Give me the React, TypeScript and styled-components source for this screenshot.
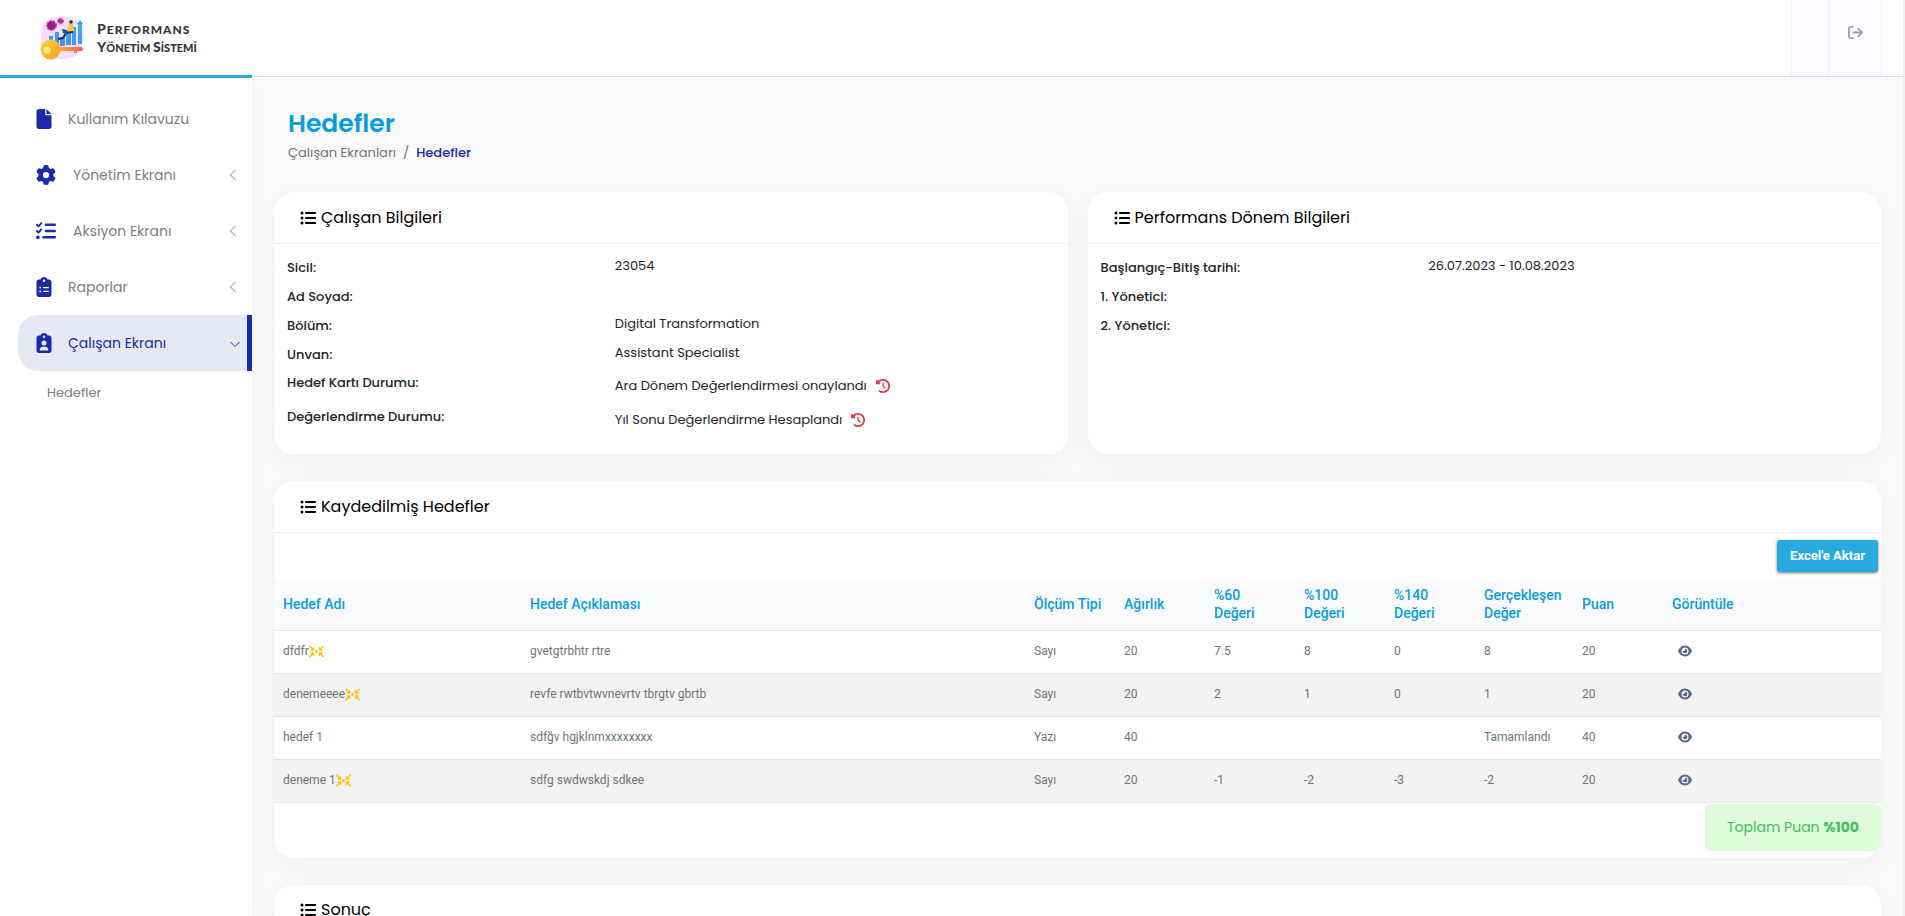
import React from "react";
import styled, { createGlobalStyle, css } from "styled-components";
import {
  FaArrowRightFromBracket,
  FaArrowsToCircle,
  FaClipboardList,
  FaClipboardUser,
  FaClockRotateLeft,
  FaEye,
  FaFile,
  FaGear,
  FaListCheck,
  FaListUl,
} from "react-icons/fa6";

const GlobalStyle = createGlobalStyle`
  *, *::before, *::after { box-sizing: border-box; }
  body {
    margin: 0;
    background: #f9f9f9;
    color: #212529;
    font: 400 13px/20px Poppins, Inter, sans-serif;
  }
  a { color: inherit; text-decoration: none; }
  h1, h2, p, ul, ol, dl, dd { margin: 0; padding: 0; }
  ul, ol { list-style: none; }
  button { font: inherit; border: 0; background: none; padding: 0; cursor: pointer; }
`;

const Shell = styled.div`
  display: grid;
  grid-template-columns: 252px minmax(0, 1fr);
  grid-template-rows: 78px minmax(0, 1fr);
  height: 100vh;
  overflow: hidden;
  border-right: 2px solid #f0f0f0;
`;

const Brand = styled.a`
  display: flex;
  align-items: center;
  gap: 13px;
  padding-left: 40px;
  background: #fff;
  border-bottom: 3px solid #29abe2;
`;

const BrandName = styled.span`
  display: flex;
  flex-direction: column;
  font: 900 11px/17px Lato, sans-serif;
  color: #33363b;
`;

const BrandLine = styled.span<{ $wide?: boolean }>`
  font-size: ${(p) => (p.$wide ? 12 : 11)}px;
  letter-spacing: ${(p) => (p.$wide ? "1px" : "normal")};
`;

const BrandCap = styled.span`
  font-size: 14px;
`;

const TopBar = styled.header`
  display: flex;
  justify-content: flex-end;
  height: 77px;
  padding-right: 22px;
  background: #fff;
  border-bottom: 1px solid #d8dbe6;
`;

const TopCell = styled.div<{ $width: number }>`
  display: flex;
  justify-content: center;
  align-items: flex-start;
  width: ${(p) => p.$width}px;
  padding-top: 25px;
  background: #fafbfe;
  border: solid #f1f3fa;
  border-width: 0 1px;
`;

const LogoutButton = styled.button`
  display: flex;
  color: #98a6ad;
  font-size: 15px;
`;

const Sidebar = styled.nav`
  padding-top: 13px;
  background: #fff;
  box-shadow: 0 0 16px rgba(0, 0, 0, 0.03);
  z-index: 1;
`;

const NavLink = styled.a<{ $active?: boolean }>`
  display: flex;
  align-items: center;
  height: 56px;
  margin-left: 18px;
  padding: 0 14px 0 18px;
  font-size: 14px;
  color: #808080;
  border-radius: 20px 0 0 20px;

  ${(p) =>
    p.$active &&
    css`
      padding-right: 7px;
      color: #1b2aa6;
      background: #e6e9f4;
      border-right: 5px solid #1b2aa6;
    `}
`;

const NavIcon = styled.span<{ $narrow?: boolean }>`
  display: flex;
  justify-content: center;
  flex: none;
  width: ${(p) => (p.$narrow ? 15 : 20)}px;
  margin-right: 17px;
  color: #1b2aa6;
  font-size: 20px;

  & > svg { flex: none; }
`;

const NavLabel = styled.span`
  flex: 1;
`;

const SubLink = styled.a`
  display: block;
  padding: 12px 0 12px 47px;
  font-size: 13px;
  color: #808080;
`;

const Content = styled.main`
  padding: 30px 22px;
  overflow-y: auto;
  scrollbar-width: none;
`;

const PageHead = styled.div`
  padding: 0 14px 29px;
`;

const PageTitle = styled.h1`
  font-size: 25px;
  line-height: 32px;
  font-weight: 600;
  color: #069ee0;
`;

const Crumbs = styled.ol`
  display: flex;
  gap: 7px;
  padding-top: 3px;
  color: #6c757d;
`;

const CurrentCrumb = styled.li`
  color: #1b2aa6;
  font-weight: 500;
`;

const CardRow = styled.div`
  display: grid;
  grid-template-columns: 1fr 1fr;
  gap: 20px;
`;

const Card = styled.section`
  display: flex;
  flex-direction: column;
  margin-bottom: 27px;
  overflow: hidden;
  background: #fff;
  border-radius: 20px;
  box-shadow: 0 8px 28px rgba(82, 63, 165, 0.05);
`;

const CardTitle = styled.h2`
  display: flex;
  align-items: center;
  gap: 5px;
  height: 52px;
  padding: 0 26px;
  font-size: 16px;
  line-height: 24px;
  font-weight: 400;
  color: #000;
  border-bottom: 1px solid #eceef0;
`;

const InfoList = styled.dl`
  padding: 8px 0 18px 13px;
`;

const InfoRow = styled.div<{ $tall?: boolean }>`
  display: grid;
  grid-template-columns: 42% 58%;
  height: ${(p) => (p.$tall ? 34 : 29)}px;

  dt {
    padding-top: ${(p) => (p.$tall ? 5 : 6)}px;
    font-weight: 500;
  }
  dd {
    display: flex;
    align-items: center;
    gap: 9px;
    height: ${(p) => (p.$tall ? 36 : 27)}px;
  }
`;

const HistoryButton = styled.button`
  display: flex;
  color: #dc3545;
  font-size: 14px;
`;

const TableTools = styled.div`
  display: flex;
  justify-content: flex-end;
  padding: 7px 3px;
`;

const ExportButton = styled.button`
  width: 101px;
  height: 32px;
  font: 700 13px/20px Roboto, sans-serif;
  color: #fff;
  background: #29abe2;
  border-radius: 3px;
  box-shadow: 0 1px 3px rgba(0, 0, 0, 0.55);
`;

const GoalTable = styled.table`
  width: 100%;
  table-layout: fixed;
  border-collapse: collapse;
  font-family: Roboto, sans-serif;

  th, td {
    text-align: left;
    border-bottom: 1px solid #e3e6e9;
  }
  th {
    height: 51px;
    padding: 0 9px;
    font-size: 14px;
    line-height: 18px;
    font-weight: 500;
    white-space: pre-line;
    color: #069ee0;
    background: #f9fafc;
  }
  td {
    height: 43px;
    padding: 0 9px 1px;
    font-size: 12px;
    line-height: 16px;
    color: #6c757d;
  }
  tbody tr:nth-child(even) { background: #f3f3f3; }
`;

const Column = styled.col<{ $width?: number }>`
  width: ${(p) => (p.$width ? `${p.$width}px` : "auto")};
`;

const GoalName = styled.span`
  display: flex;
  align-items: center;

  & > svg {
    color: #ffc107;
    width: 15px;
    height: 15px;
  }
`;

const ViewButton = styled.button`
  display: flex;
  margin-left: 6px;
  color: #5b6787;
  font-size: 14px;
`;

const TotalArea = styled.div`
  display: flex;
  justify-content: flex-end;
  padding: 1px 0 7px;
`;

const Total = styled.p`
  padding: 11px 22px 12px;
  font-size: 14px;
  line-height: 24px;
  color: #44bd5d;
  background: #dffbd9;
  border-radius: 6px;
`;

const BrandLogo = () => (
  <svg width="44" height="44" viewBox="0 0 44 44" aria-hidden="true">
    <defs>
      <linearGradient id="bar" x1="0" y1="0" x2="0" y2="1">
        <stop offset="0" stopColor="#2fb5fb" />
        <stop offset="1" stopColor="#4b8cf0" />
      </linearGradient>
      <linearGradient id="gold" x1="0" y1="0" x2="1" y2="1">
        <stop offset="0" stopColor="#ffd93c" />
        <stop offset="1" stopColor="#f39a1c" />
      </linearGradient>
      <linearGradient id="shaft" x1="0" y1="0" x2="1" y2="0">
        <stop offset="0" stopColor="#fbb02c" />
        <stop offset="1" stopColor="#f0634e" />
      </linearGradient>
    </defs>
    <path d="M8 4C17-1 29 0 36 4c7 5 8 15 6 25-2 11-10 14-20 14C9 43 1 38 1 25 0 16 1 9 8 4Z" fill="#f5dcf8" />
    <g fill="url(#bar)">
      <path d="M9 20h4v11H9zM15 16h4v15h-4zM20 21h5v9h-5zM26 15h5v14h-5zM32 11h4v18h-4zM38 8h4v20h-4z" />
      <path d="m37 8 3-4 3 4z" />
    </g>
    <circle cx="11.500" cy="9.500" r="3" fill="#8e1f9c" stroke="#a4158f" strokeWidth="3" />
    <circle cx="11.500" cy="9.500" r="5" fill="none" stroke="#b32083" strokeDasharray="2 1.500" />
    <circle cx="20.500" cy="5" r="2" fill="#c2308f" stroke="#a4158f" />
    <circle cx="20.500" cy="5" r="3" fill="none" stroke="#b32083" strokeDasharray="1.500 1" />
    <circle cx="31" cy="6" r="1.800" fill="#24275c" />
    <path d="m29 8 4 0 1 7-5 1-2-3z" fill="#ffc928" />
    <path d="m33 16-7 1-3 5-5 1" fill="none" stroke="#20265e" strokeWidth="2" />
    <path d="m22 13 5 1 1 4-5-1z" fill="#1b4fb4" />
    <path d="M18 31h24q2 2 0 4h-5v2h-3v-2H18z" fill="url(#shaft)" />
    <circle cx="10.500" cy="33.500" r="10" fill="url(#gold)" />
    <circle cx="7" cy="34" r="4.500" fill="#ffe27a" stroke="#f2a626" />
  </svg>
);

const Chevron = ({ open }: { open?: boolean }) => (
  <svg width="10" height="12" viewBox="0 0 10 12" fill="none" stroke="currentColor" aria-hidden="true">
    <path d={open ? "M.5 5 5 9.500 9.500 5" : "M7.500 1 2.500 6 7.500 11"} />
  </svg>
);

const navItems = [
  { label: "Kullanım Kılavuzu", icon: FaFile, narrow: true },
  { label: "Yönetim Ekranı", icon: FaGear, group: true },
  { label: "Aksiyon Ekranı", icon: FaListCheck, group: true },
  { label: "Raporlar", icon: FaClipboardList, narrow: true, group: true },
  { label: "Çalışan Ekranı", icon: FaClipboardUser, narrow: true, group: true, active: true },
];

type Info = { label: string; value?: string; history?: boolean };

const employeeInfo: Info[] = [
  { label: "Sicil:", value: "23054" },
  { label: "Ad Soyad:" },
  { label: "Bölüm:", value: "Digital Transformation" },
  { label: "Unvan:", value: "Assistant Specialist" },
  { label: "Hedef Kartı Durumu:", value: "Ara Dönem Değerlendirmesi onaylandı", history: true },
  { label: "Değerlendirme Durumu:", value: "Yıl Sonu Değerlendirme Hesaplandı", history: true },
];

const periodInfo: Info[] = [
  { label: "Başlangıç-Bitiş tarihi:", value: "26.07.2023 - 10.08.2023" },
  { label: "1. Yönetici:" },
  { label: "2. Yönetici:" },
];

const columns: { title: string; width?: number }[] = [
  { title: "Hedef Adı", width: 247 },
  { title: "Hedef Açıklaması" },
  { title: "Ölçüm Tipi", width: 90 },
  { title: "Ağırlık", width: 90 },
  { title: "%60\nDeğeri", width: 90 },
  { title: "%100\nDeğeri", width: 90 },
  { title: "%140\nDeğeri", width: 90 },
  { title: "Gerçekleşen\nDeğer", width: 98 },
  { title: "Puan", width: 90 },
  { title: "Görüntüle", width: 218 },
];

const goals = [
  { name: "dfdfr", shared: true, cells: ["gvetgtrbhtr rtre", "Sayı", "20", "7.5", "8", "0", "8", "20"] },
  { name: "denemeeee", shared: true, cells: ["revfe rwtbvtwvnevrtv tbrgtv gbrtb", "Sayı", "20", "2", "1", "0", "1", "20"] },
  { name: "hedef 1", shared: false, cells: ["sdfğv hgjklnmxxxxxxxx", "Yazı", "40", "", "", "", "Tamamlandı", "40"] },
  { name: "deneme 1", shared: true, cells: ["sdfg swdwskdj sdkee", "Sayı", "20", "-1", "-2", "-3", "-2", "20"] },
];

const InfoCard = ({ title, rows }: { title: string; rows: Info[] }) => (
  <Card>
    <CardTitle><FaListUl />{title}</CardTitle>
    <InfoList>
      {rows.map((row) => (
        <InfoRow key={row.label} $tall={row.history}>
          <dt>{row.label}</dt>
          <dd>
            {row.value}
            {row.history && (
              <HistoryButton type="button" aria-label={row.label}><FaClockRotateLeft /></HistoryButton>
            )}
          </dd>
        </InfoRow>
      ))}
    </InfoList>
  </Card>
);

export default function App() {
  return (
    <>
      <GlobalStyle />
      <Shell lang="tr">
        <Brand href="#">
          <BrandLogo />
          <BrandName>
            <BrandLine $wide><BrandCap>P</BrandCap>ERFORMANS</BrandLine>
            <BrandLine><BrandCap>Y</BrandCap>ÖNETİM <BrandCap>S</BrandCap>İSTEMİ</BrandLine>
          </BrandName>
        </Brand>
        <TopBar>
          <TopCell $width={38} />
          <TopCell $width={52}>
            <LogoutButton type="button" aria-label="Çıkış"><FaArrowRightFromBracket /></LogoutButton>
          </TopCell>
        </TopBar>
        <Sidebar>
          <ul>
            {navItems.map(({ label, icon: Icon, narrow, group, active }) => (
              <li key={label}>
                <NavLink href="#" $active={active}>
                  <NavIcon $narrow={narrow}><Icon /></NavIcon>
                  <NavLabel>{label}</NavLabel>
                  {group && <Chevron open={active} />}
                </NavLink>
              </li>
            ))}
            <li><SubLink href="#">Hedefler</SubLink></li>
          </ul>
        </Sidebar>
        <Content>
          <PageHead>
            <PageTitle>Hedefler</PageTitle>
            <Crumbs>
              <li><a href="#">Çalışan Ekranları</a></li>
              <li aria-hidden="true">/</li>
              <CurrentCrumb>Hedefler</CurrentCrumb>
            </Crumbs>
          </PageHead>
          <CardRow>
            <InfoCard title="Çalışan Bilgileri" rows={employeeInfo} />
            <InfoCard title="Performans Dönem Bilgileri" rows={periodInfo} />
          </CardRow>
          <Card>
            <CardTitle><FaListUl />Kaydedilmiş Hedefler</CardTitle>
            <TableTools>
              <ExportButton type="button">Excel'e Aktar</ExportButton>
            </TableTools>
            <GoalTable>
              <colgroup>
                {columns.map((c) => <Column key={c.title} $width={c.width} />)}
              </colgroup>
              <thead>
                <tr>{columns.map((c) => <th key={c.title} scope="col">{c.title}</th>)}</tr>
              </thead>
              <tbody>
                {goals.map((goal) => (
                  <tr key={goal.name}>
                    <td><GoalName>{goal.name}{goal.shared && <FaArrowsToCircle />}</GoalName></td>
                    {goal.cells.map((cell, i) => <td key={i}>{cell}</td>)}
                    <td><ViewButton type="button" aria-label="Görüntüle"><FaEye /></ViewButton></td>
                  </tr>
                ))}
              </tbody>
            </GoalTable>
            <TotalArea>
              <Total>Toplam Puan <strong>%100</strong></Total>
            </TotalArea>
          </Card>
          <Card>
            <CardTitle><FaListUl />Sonuç</CardTitle>
          </Card>
        </Content>
      </Shell>
    </>
  );
}
